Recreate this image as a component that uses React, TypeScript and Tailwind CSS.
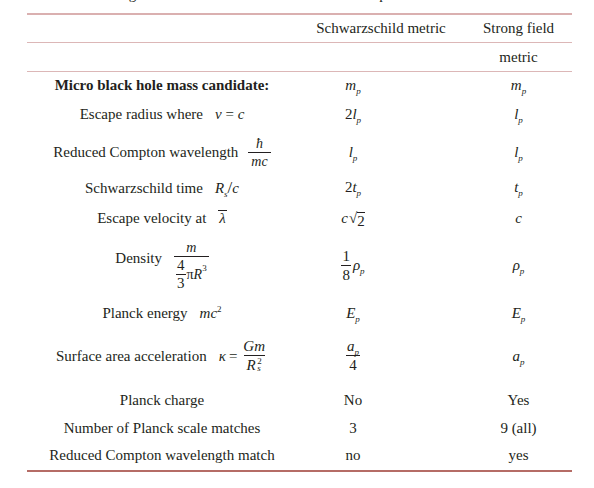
import React from "react";

const Sub = ({ children }: { children: React.ReactNode }) => (
  <span className="relative top-[4px] text-[9px] italic leading-none">{children}</span>
);
const Sup = ({ children }: { children: React.ReactNode }) => (
  <span className="relative -top-[6px] text-[9px] leading-none">{children}</span>
);
const I = ({ children }: { children: React.ReactNode }) => <span className="italic">{children}</span>;

const Frac = ({ num, den }: { num: React.ReactNode; den: React.ReactNode }) => (
  <span className="inline-flex flex-col items-center">
    <span className="px-[3px] leading-[17px]">{num}</span>
    <span className="border-t border-[#231f20] px-[3px] leading-[18px]">{den}</span>
  </span>
);

const Row = ({
  h,
  c1,
  c2,
  c3,
}: {
  h: string;
  c1: React.ReactNode;
  c2: React.ReactNode;
  c3: React.ReactNode;
}) => (
  <div className={`flex items-center ${h}`}>
    <div className="flex w-[270px] items-center justify-center">{c1}</div>
    <div className="flex w-[112px] items-center justify-center">{c2}</div>
    <div className="w-[56px]" />
    <div className="flex w-[107px] items-center justify-center">{c3}</div>
  </div>
);

const Mp = () => (
  <span>
    <I>m</I>
    <Sub>p</Sub>
  </span>
);

export default function App() {
  return (
    <div className="h-[488px] w-[594px] overflow-hidden bg-white font-['Liberation_Serif',serif] text-[15px] text-[#231f20]">
      {/* cropped caption */}
      <div className="h-[13px] overflow-hidden">
        <div className="-mt-[15px] flex pl-[27px] leading-[18px]">
          <span>Table 1. Matching</span>
          <span className="ml-[217px]">compared</span>
        </div>
      </div>

      <div className="ml-[27px] w-[545px]">
        <div className="h-[2px] bg-[#dab0b0]" />
        <div className="flex h-[27px] items-center">
          <div className="w-[270px]" />
          <div className="w-[168px] text-center">Schwarzschild metric</div>
          <div className="w-[107px] text-center">Strong field</div>
        </div>
        <div className="h-px bg-[#dcb7b7]" />
        <div className="flex h-[28px] items-center">
          <div className="w-[438px]" />
          <div className="w-[107px] text-center">metric</div>
        </div>
        <div className="h-px bg-[#dcb7b7]" />

        <Row
          h="h-[27px]"
          c1={<span className="font-bold">Micro black hole mass candidate:</span>}
          c2={<Mp />}
          c3={<Mp />}
        />
        <Row
          h="h-[30px]"
          c1={
            <span>
              Escape radius where
              <span className="ml-[12px]">
                <I>v</I> = <I>c</I>
              </span>
            </span>
          }
          c2={
            <span>
              2<I>l</I>
              <Sub>p</Sub>
            </span>
          }
          c3={
            <span>
              <I>l</I>
              <Sub>p</Sub>
            </span>
          }
        />
        <Row
          h="h-[46px]"
          c1={
            <span className="flex items-center">
              <span>Reduced Compton wavelength</span>
              <span className="ml-[10px] text-[14px]">
                <Frac num={<I>ħ</I>} den={<I>mc</I>} />
              </span>
            </span>
          }
          c2={
            <span>
              <I>l</I>
              <Sub>p</Sub>
            </span>
          }
          c3={
            <span>
              <I>l</I>
              <Sub>p</Sub>
            </span>
          }
        />
        <Row
          h="h-[25px]"
          c1={
            <span>
              Schwarzschild time
              <span className="ml-[12px]">
                <I>R</I>
                <Sub>s</Sub>
                <span className="text-[17px]">/</span>
                <I>c</I>
              </span>
            </span>
          }
          c2={
            <span>
              2<I>t</I>
              <Sub>p</Sub>
            </span>
          }
          c3={
            <span>
              <I>t</I>
              <Sub>p</Sub>
            </span>
          }
        />
        <Row
          h="h-[36px]"
          c1={
            <span>
              Escape velocity at
              <span className="ml-[12px] inline-block border-t border-[#231f20] px-[1px] leading-[14px] italic">λ</span>
            </span>
          }
          c2={
            <span className="flex items-end">
              <I>c</I>
              <span className="ml-[1px]">√</span>
              <span className="border-t border-[#231f20] leading-[16px]">2</span>
            </span>
          }
          c3={<I>c</I>}
        />
        <Row
          h="h-[58px]"
          c1={
            <span className="flex items-start">
              <span className="mt-[8px]">Density</span>
              <span className="ml-[12px] inline-flex flex-col items-center text-[14px]">
                <span className="leading-[17px]">
                  <I>m</I>
                </span>
                <span className="flex items-center border-t border-[#231f20] px-[2px]">
                  <span className="inline-flex flex-col items-center text-[15px]">
                    <span className="leading-[17px]">4</span>
                    <span className="border-t border-[#231f20] px-[1px] leading-[17px]">3</span>
                  </span>
                  <span className="ml-[1px]">π</span>
                  <I>R</I>
                  <Sup>3</Sup>
                </span>
              </span>
            </span>
          }
          c2={
            <span className="flex items-center">
              <span className="inline-flex flex-col items-center">
                <span className="leading-[18px]">1</span>
                <span className="border-t border-[#231f20] px-[1px] leading-[18px]">8</span>
              </span>
              <span className="ml-[2px]">
                <I>ρ</I>
                <Sub>p</Sub>
              </span>
            </span>
          }
          c3={
            <span>
              <I>ρ</I>
              <Sub>p</Sub>
            </span>
          }
        />
        <Row
          h="h-[38px]"
          c1={
            <span>
              Planck energy
              <span className="ml-[12px]">
                <I>mc</I>
                <Sup>2</Sup>
              </span>
            </span>
          }
          c2={
            <span>
              <I>E</I>
              <Sub>p</Sub>
            </span>
          }
          c3={
            <span>
              <I>E</I>
              <Sub>p</Sub>
            </span>
          }
        />
        <div className="pb-[4px]">
          <Row
            h="h-[48px]"
            c1={
              <span className="flex items-center">
                <span>Surface area acceleration</span>
                <span className="ml-[12px] flex items-center">
                  <I>κ</I>
                  <span className="mx-[3px]">=</span>
                  <Frac
                    num={<I>Gm</I>}
                    den={
                      <span className="relative inline-block pr-[6px]">
                        <I>R</I>
                        <span className="absolute right-0 top-[1px] text-[9px] leading-none">2</span>
                        <span className="absolute bottom-[1px] right-[1px] text-[9px] italic leading-none">s</span>
                      </span>
                    }
                  />
                </span>
              </span>
            }
            c2={
              <Frac
                num={
                  <span>
                    <I>a</I>
                    <Sub>p</Sub>
                  </span>
                }
                den={<span>4</span>}
              />
            }
            c3={
              <span>
                <I>a</I>
                <Sub>p</Sub>
              </span>
            }
          />
        </div>
        <Row h="h-[32px]" c1={<span>Planck charge</span>} c2={<span>No</span>} c3={<span>Yes</span>} />
        <Row h="h-[24px]" c1={<span>Number of Planck scale matches</span>} c2={<span>3</span>} c3={<span>9 (all)</span>} />
        <Row h="h-[30px]" c1={<span>Reduced Compton wavelength match</span>} c2={<span>no</span>} c3={<span>yes</span>} />
        <div className="h-[2px] bg-[#b56c66]" />
      </div>
    </div>
  );
}
